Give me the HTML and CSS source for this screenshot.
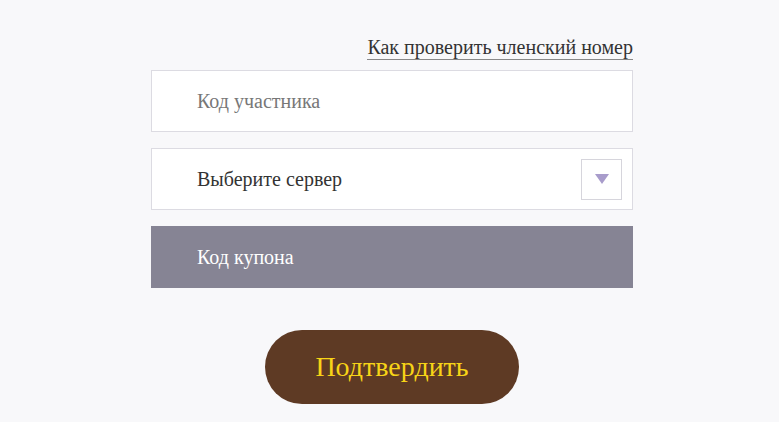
FILE: index.html
```html
<!DOCTYPE html>
<html lang="ru">

<head>
  <meta charset="UTF-8">
  <meta name="viewport" content="width=device-width, initial-scale=1.0">
  <title>Подтверждение</title>
  <link rel="stylesheet" href="styles.css">
</head>

<body>
  <div class="forma">
    <div class="ajuda">
      <a href="#">Как проверить членский номер</a>
    </div>
    <div class="campo">
      <span class="placeholder">Код участника</span>
    </div>
    <div class="campo servidor">
      <span>Выберите сервер</span>
      <span class="seta">
        <svg width="14" height="10" viewBox="0 0 14 10"><polygon points="0,0 14,0 7,10" fill="#a89ccb"/></svg>
      </span>
    </div>
    <div class="campo cupom">
      <span>Код купона</span>
    </div>
    <div class="botao">
      <button>Подтвердить</button>
    </div>
  </div>
</body>

</html>
```

FILE: styles.css
```css
body {
  margin: 0;
  padding-left: 5px;
  font-family: "Liberation Serif", "Times New Roman", serif;
  background-color: #f8f8fa;
  color: #333;
}

.forma {
  width: 482px;
  margin: 0 auto;
  padding-top: 36px;
}

.ajuda {
  text-align: right;
  height: 34px;
}

.ajuda a {
  color: #333;
  font-size: 20px;
  text-decoration: none;
  border-bottom: 1px solid #888;
  padding-bottom: 1px;
}

.campo {
  display: flex;
  align-items: center;
  height: 60px;
  padding: 0 10px 0 45px;
  background-color: #fff;
  border: 1px solid #dcdbe2;
  margin-bottom: 16px;
  font-size: 20px;
}

.placeholder {
  color: #777;
}

.servidor {
  justify-content: space-between;
}

.seta {
  display: flex;
  align-items: center;
  justify-content: center;
  width: 39px;
  height: 39px;
  border: 1px solid #d6d5dc;
}

.cupom {
  background-color: #868494;
  border-color: #868494;
  color: #fff;
}

.botao {
  text-align: center;
  padding-top: 26px;
}

.botao button {
  width: 254px;
  height: 74px;
  border: none;
  border-radius: 37px;
  background-color: #5e3a24;
  color: #f7d417;
  font-family: "Liberation Serif", "Times New Roman", serif;
  font-size: 28px;
}
```
